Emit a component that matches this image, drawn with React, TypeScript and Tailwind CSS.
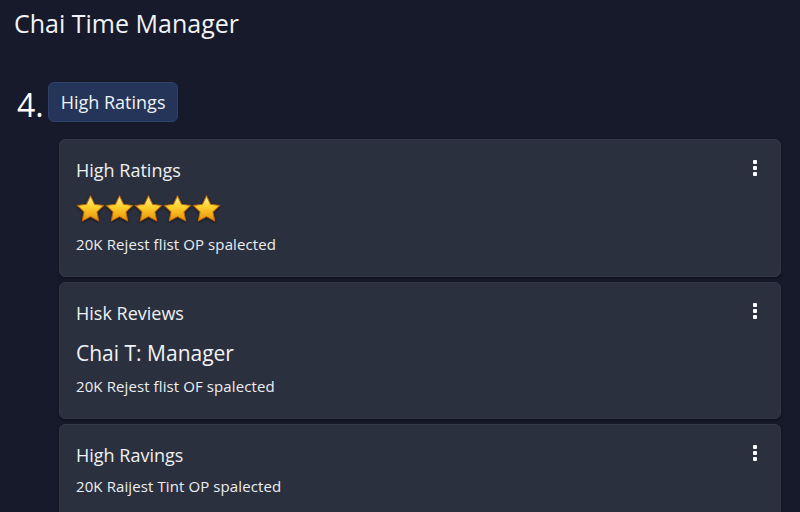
import React from 'react';

const Star = () => (
  <svg width="29" height="28" viewBox="0.6 0.8 22.8 22" className="drop-shadow-[0_1px_1px_rgba(0,0,0,0.6)]">
    <defs>
      <linearGradient id="starFill" x1="0" y1="0" x2="0" y2="1">
        <stop offset="0%" stopColor="#fff3a0" />
        <stop offset="45%" stopColor="#fcd02a" />
        <stop offset="100%" stopColor="#e88c0c" />
      </linearGradient>
    </defs>
    <path
      d="M12 1.4l3.2 6.7 7.3.9-5.4 5.1 1.4 7.2L12 17.8l-6.5 3.5 1.4-7.2-5.4-5.1 7.3-.9z"
      fill="url(#starFill)"
      stroke="#b8660a"
      strokeWidth="0.8"
      strokeLinejoin="round"
    />
  </svg>
);

const Kebab = () => (
  <div className="flex flex-col gap-[2px] pt-[1px]">
    <span className="block w-[4px] h-[4px] rounded-[1px] bg-white" />
    <span className="block w-[4px] h-[4px] rounded-[1px] bg-white" />
    <span className="block w-[4px] h-[4px] rounded-[1px] bg-white" />
  </div>
);

interface CardProps {
  title: string;
  children?: React.ReactNode;
  footer: string;
  height: string;
}

const Card: React.FC<CardProps> = ({ title, children, footer, height }) => (
  <div className={`relative rounded-md bg-[#2b303e] border border-[#333848] shadow-[0_1px_3px_rgba(0,0,0,0.5)] pl-4 pr-6 pt-[18px] ${height}`}>
    <div className="absolute right-[23px] top-[19px]">
      <Kebab />
    </div>
    <h3 className="text-[18px] leading-6 text-[#eef0f4]">{title}</h3>
    {children}
    <p className="text-[15px] leading-5 font-medium tracking-[0.1px] text-[#eceef2]">{footer}</p>
  </div>
);

export default function App() {
  return (
    <div className="w-[800px] h-[512px] overflow-hidden bg-[#161a2a] font-['Open_Sans',sans-serif] text-white">
      <h1 className="pl-[14px] pt-[7px] text-[25px] leading-8 text-[#f2f3f6]">Chai Time Manager</h1>

      <div className="flex items-end gap-[4px] pl-[17px] mt-[43px]">
        <span className="text-[32px] leading-[35px] text-white">4.</span>
        <span className="rounded-md bg-[#243559] border border-[#2f4168] px-[12px] h-[40px] flex items-center text-[18px] text-[#f0f2f6]">
          High Ratings
        </span>
      </div>

      <div className="ml-[59px] mr-[19px] mt-[17px] flex flex-col gap-[5px]">
        <Card title="High Ratings" footer="20K Rejest flist OP spalected" height="h-[138px]">
          <div className="flex mt-[13px] mb-[11px]">
            <Star />
            <Star />
            <Star />
            <Star />
            <Star />
          </div>
        </Card>
        <Card title="Hisk Reviews" footer="20K Rejest flist OF spalected" height="h-[137px]">
          <p className="text-[21px] leading-7 text-[#f2f3f6] mt-[14px] mb-[9px]">Chai T: Manager</p>
        </Card>
        <Card title="High Ravings" footer="20K Raijest Tint OP spalected" height="h-[120px]">
          <div className="h-[9px]" />
        </Card>
      </div>
    </div>
  );
}
